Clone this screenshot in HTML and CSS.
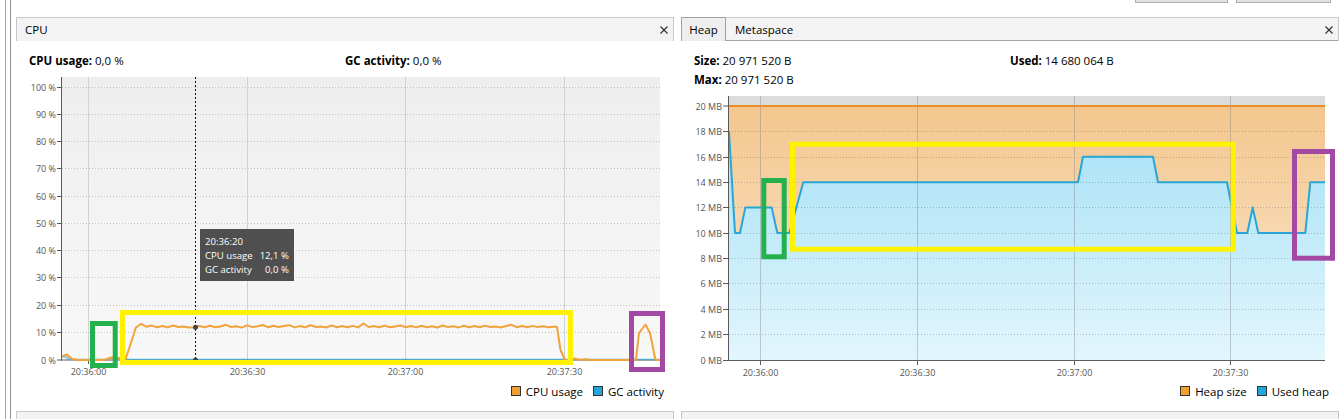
FILE: index.html
```html
<!DOCTYPE html>
<html>
<head>
<meta charset="utf-8">
<link rel="stylesheet" href="styles.css">
</head>
<body>
<div class="app">
  <div class="rail"><div class="rail-line"></div></div>
  <div class="main">
    <div class="toolbar"><div class="tbtn tbtn-a"></div><div class="tbtn tbtn-b"></div></div>
    <div class="panels">
      <section class="panel">
        <header class="phead">
          <span class="ptitle">CPU</span>
          <svg class="close" width="8" height="8" viewBox="0 0 8 8"><path d="M0.5 0.5 L7.5 7.5 M7.5 0.5 L0.5 7.5"/></svg>
        </header>
        <div class="pbody">
          <div class="stats one">
            <div><b>CPU usage:</b> 0,0 %</div>
            <div><b>GC activity:</b> 0,0 %</div>
          </div>
          <svg class="chart" width="658" height="310" viewBox="16 70 658 310">
            <defs>
              <linearGradient id="cpuBg" x1="0" y1="0" x2="0" y2="1">
                <stop offset="0" stop-color="#eeeeee"/>
                <stop offset="1" stop-color="#f8f8f8"/>
              </linearGradient>
            </defs>
            <rect x="62" y="77" width="598" height="283" fill="url(#cpuBg)"/>
            <g class="vgrid">
              <line x1="88.5" y1="77" x2="88.5" y2="360"/>
              <line x1="247.5" y1="77" x2="247.5" y2="360"/>
              <line x1="405.5" y1="77" x2="405.5" y2="360"/>
              <line x1="564.5" y1="77" x2="564.5" y2="360"/>
            </g>
            <g class="hgrid">
              <line x1="62" y1="87.5" x2="660" y2="87.5"/>
              <line x1="62" y1="114.5" x2="660" y2="114.5"/>
              <line x1="62" y1="141.5" x2="660" y2="141.5"/>
              <line x1="62" y1="168.5" x2="660" y2="168.5"/>
              <line x1="62" y1="196.5" x2="660" y2="196.5"/>
              <line x1="62" y1="223.5" x2="660" y2="223.5"/>
              <line x1="62" y1="250.5" x2="660" y2="250.5"/>
              <line x1="62" y1="277.5" x2="660" y2="277.5"/>
              <line x1="62" y1="305.5" x2="660" y2="305.5"/>
              <line x1="62" y1="332.5" x2="660" y2="332.5"/>
            </g>
            <g class="axis">
              <line x1="61.5" y1="77" x2="61.5" y2="360.5"/>
              <line x1="61" y1="360" x2="660" y2="360"/>
              <line x1="57" y1="87.5" x2="61" y2="87.5"/>
              <line x1="57" y1="114.5" x2="61" y2="114.5"/>
              <line x1="57" y1="141.5" x2="61" y2="141.5"/>
              <line x1="57" y1="168.5" x2="61" y2="168.5"/>
              <line x1="57" y1="196.5" x2="61" y2="196.5"/>
              <line x1="57" y1="223.5" x2="61" y2="223.5"/>
              <line x1="57" y1="250.5" x2="61" y2="250.5"/>
              <line x1="57" y1="277.5" x2="61" y2="277.5"/>
              <line x1="57" y1="305.5" x2="61" y2="305.5"/>
              <line x1="57" y1="332.5" x2="61" y2="332.5"/>
              <line x1="57" y1="360" x2="61" y2="360"/>
              <line x1="88.5" y1="360" x2="88.5" y2="364"/>
              <line x1="247.5" y1="360" x2="247.5" y2="364"/>
              <line x1="405.5" y1="360" x2="405.5" y2="364"/>
              <line x1="564.5" y1="360" x2="564.5" y2="364"/>
            </g>
            <g class="tick ylab">
              <text x="56" y="91">100 %</text>
              <text x="56" y="118">90 %</text>
              <text x="56" y="145">80 %</text>
              <text x="56" y="172">70 %</text>
              <text x="56" y="200">60 %</text>
              <text x="56" y="227">50 %</text>
              <text x="56" y="254">40 %</text>
              <text x="56" y="281">30 %</text>
              <text x="56" y="309">20 %</text>
              <text x="56" y="336">10 %</text>
              <text x="56" y="363.5">0 %</text>
            </g>
            <g class="tick xlab">
              <text x="88.5" y="375">20:36:00</text>
              <text x="247.5" y="375">20:36:30</text>
              <text x="405.5" y="375">20:37:00</text>
              <text x="564.5" y="375">20:37:30</text>
            </g>
            <line class="cursor" x1="195.5" y1="77" x2="195.5" y2="360"/>
            <polyline class="gc-line" points="62,356.5 66,357 70,359.5 108,359.5 112,357.5 118,357.5 122,359.5 660,359.5"/>
            <polyline class="cpu-line" points="62,356.5 67,354.5 72,359 78,360 102,360 106,359.5 111,357.5 117,357.8 121,358.5 125.3,360 130.6,344 135.9,327.5 141.2,323.8 146.5,326.8 151.8,325.6 157.1,327.2 162.4,326 167.6,327.4 172.9,325.5 178.2,327 183.5,326.4 188.8,327.4 194.1,327.2 199.4,326 204.7,327.3 210,325.8 215.3,327.2 220.5,326.5 225.8,324.8 231.1,327 236.4,326.2 241.7,327.6 247,325.4 252.3,327.1 257.6,326.3 262.9,325 268.2,327.3 273.4,325.7 278.7,327.1 284,326 289.3,325.2 294.6,327.4 299.9,326.1 305.2,327.2 310.5,325.3 315.8,327 321.1,326.6 326.3,327.5 331.6,325.4 336.9,327.2 342.2,326 347.5,327.3 352.8,325.9 358.1,327.4 363.4,323.5 368.7,327 374,326.1 379.2,327.3 384.5,325.6 389.8,327.2 395.1,326.4 400.4,325.4 405.7,327.3 411,326 416.3,327.4 421.6,325.7 426.9,327.2 432.1,326.2 437.4,327.5 442.7,325.5 448,327.1 453.3,326.3 458.6,327.4 463.9,325.8 469.2,327.2 474.5,326 479.8,327.3 485,325.6 490.3,327 495.6,326.4 500.9,327.5 506.2,326 511.5,324.8 516.8,327.2 522.1,326.1 527.4,327.3 532.7,325.9 537.9,327.1 543.2,326.3 548.5,327.2 553.8,326.8 557,326.8 560.5,350 565,360 570,360 575,358.5 580,360 586,359.2 590,360 636,360 639,333 645.5,324.5 650,333 655.5,360 660,360"/>
            <circle class="marker" cx="195.5" cy="327.3" r="2.5"/>
            <circle class="marker" cx="195.5" cy="360" r="2.5"/>
            <rect class="tip" x="200" y="229" width="94" height="52"/>
            <g class="tiptext">
              <text x="205" y="245">20:36:20</text>
              <text x="205" y="259">CPU usage</text>
              <text x="289" y="259" class="num">12,1 %</text>
              <text x="205" y="273">GC activity</text>
              <text x="289" y="273" class="num">0,0 %</text>
            </g>
            <rect class="mark green" x="92.5" y="323.5" width="22.7" height="42"/>
            <rect class="mark yellow" x="122.5" y="312.5" width="448" height="50"/>
            <rect class="mark purple" x="631.5" y="313.5" width="31" height="56"/>
          </svg>
          <div class="legend">
            <div class="litem"><span class="swatch orange"></span>CPU usage</div>
            <div class="litem"><span class="swatch blue"></span>GC activity</div>
          </div>
        </div>
      </section>
      <section class="panel">
        <header class="phead tabs">
          <div class="tab active">Heap</div>
          <div class="tab">Metaspace</div>
          <div class="tabfill">
            <svg class="close" width="8" height="8" viewBox="0 0 8 8"><path d="M0.5 0.5 L7.5 7.5 M7.5 0.5 L0.5 7.5"/></svg>
          </div>
        </header>
        <div class="pbody">
          <div class="stats two">
            <div><b>Size:</b> 20 971 520 B</div>
            <div><b>Used:</b> 14 680 064 B</div>
            <div><b>Max:</b> 20 971 520 B</div>
          </div>
          <svg class="chart" width="658" height="291" viewBox="681 89 658 291">
            <defs>
              <linearGradient id="heapOr" gradientUnits="userSpaceOnUse" x1="0" y1="106" x2="0" y2="360">
                <stop offset="0" stop-color="#f3c68d"/>
                <stop offset="1" stop-color="#fce9d3"/>
              </linearGradient>
              <linearGradient id="heapBl" gradientUnits="userSpaceOnUse" x1="0" y1="131" x2="0" y2="360">
                <stop offset="0" stop-color="#a8e1f6"/>
                <stop offset="1" stop-color="#e2f6fd"/>
              </linearGradient>
            </defs>
            <rect x="729" y="96" width="596" height="10" fill="#dcdcdc"/>
            <rect x="729" y="106" width="596" height="254" fill="url(#heapOr)"/>
            <polygon fill="url(#heapBl)" points="729,131.4 735,233 740,233 745.3,207.6 771.7,207.6 777.3,233 789.3,233 803.3,182.2 1078,182.2 1083,156.8 1153,156.8 1158,182.2 1227,182.2 1237,233 1247.3,233 1252.7,207.6 1258.3,233 1305.3,233 1310.3,182.2 1325,182.2 1325,360 729,360"/>
            <g class="hgrid heapgrid">
              <line x1="729" y1="131.5" x2="1325" y2="131.5"/>
              <line x1="729" y1="157.5" x2="1325" y2="157.5"/>
              <line x1="729" y1="182.5" x2="1325" y2="182.5"/>
              <line x1="729" y1="207.5" x2="1325" y2="207.5"/>
              <line x1="729" y1="233.5" x2="1325" y2="233.5"/>
              <line x1="729" y1="258.5" x2="1325" y2="258.5"/>
              <line x1="729" y1="283.5" x2="1325" y2="283.5"/>
              <line x1="729" y1="309.5" x2="1325" y2="309.5"/>
              <line x1="729" y1="334.5" x2="1325" y2="334.5"/>
            </g>
            <g class="vgrid heapv">
              <line x1="760.5" y1="96" x2="760.5" y2="360"/>
              <line x1="917.5" y1="96" x2="917.5" y2="360"/>
              <line x1="1074.5" y1="96" x2="1074.5" y2="360"/>
              <line x1="1230.5" y1="96" x2="1230.5" y2="360"/>
            </g>
            <line class="size-line" x1="729" y1="106" x2="1325" y2="106"/>
            <polyline class="used-line" points="729,131.4 735,233 740,233 745.3,207.6 771.7,207.6 777.3,233 789.3,233 803.3,182.2 1078,182.2 1083,156.8 1153,156.8 1158,182.2 1227,182.2 1237,233 1247.3,233 1252.7,207.6 1258.3,233 1305.3,233 1310.3,182.2 1325,182.2"/>
            <g class="axis">
              <line x1="728.5" y1="96" x2="728.5" y2="361"/>
              <line x1="728" y1="360.5" x2="1325" y2="360.5"/>
              <line x1="723" y1="106" x2="728" y2="106"/>
              <line x1="723" y1="131.5" x2="728" y2="131.5"/>
              <line x1="723" y1="157.5" x2="728" y2="157.5"/>
              <line x1="723" y1="182.5" x2="728" y2="182.5"/>
              <line x1="723" y1="207.5" x2="728" y2="207.5"/>
              <line x1="723" y1="233.5" x2="728" y2="233.5"/>
              <line x1="723" y1="258.5" x2="728" y2="258.5"/>
              <line x1="723" y1="283.5" x2="728" y2="283.5"/>
              <line x1="723" y1="309.5" x2="728" y2="309.5"/>
              <line x1="723" y1="334.5" x2="728" y2="334.5"/>
              <line x1="723" y1="360.5" x2="728" y2="360.5"/>
              <line x1="760.5" y1="360" x2="760.5" y2="365"/>
              <line x1="917.5" y1="360" x2="917.5" y2="365"/>
              <line x1="1074.5" y1="360" x2="1074.5" y2="365"/>
              <line x1="1230.5" y1="360" x2="1230.5" y2="365"/>
            </g>
            <g class="tick ylab">
              <text x="722" y="109.5">20 MB</text>
              <text x="722" y="135">18 MB</text>
              <text x="722" y="161">16 MB</text>
              <text x="722" y="186">14 MB</text>
              <text x="722" y="211">12 MB</text>
              <text x="722" y="237">10 MB</text>
              <text x="722" y="262">8 MB</text>
              <text x="722" y="287">6 MB</text>
              <text x="722" y="313">4 MB</text>
              <text x="722" y="338">2 MB</text>
              <text x="722" y="364">0 MB</text>
            </g>
            <g class="tick xlab">
              <text x="760.5" y="376">20:36:00</text>
              <text x="917.5" y="376">20:36:30</text>
              <text x="1074.5" y="376">20:37:00</text>
              <text x="1230.5" y="376">20:37:30</text>
            </g>
            <rect class="mark green" x="763.8" y="180.5" width="20.4" height="76.3"/>
            <rect class="mark yellow" x="792.5" y="144.2" width="440.7" height="105"/>
            <rect class="mark purple" x="1294.5" y="151.5" width="38" height="106.7"/>
          </svg>
          <div class="legend">
            <div class="litem"><span class="swatch orange"></span>Heap size</div>
            <div class="litem"><span class="swatch blue"></span>Used heap</div>
          </div>
        </div>
      </section>
    </div>
    <div class="panels bottom">
      <div class="stub"></div>
      <div class="stub"></div>
    </div>
  </div>
</div>
</body>
</html>
```

FILE: styles.css
```css
html, body {
  margin: 0;
  padding: 0;
}
body {
  width: 1341px;
  height: 419px;
  overflow: hidden;
  background: #ffffff;
  font-family: "Open Sans", "Segoe UI", "Noto Sans", sans-serif;
  font-size: 11.5px;
  color: #000;
}
.app {
  display: flex;
  height: 419px;
}
.rail {
  width: 16px;
  flex: none;
  box-sizing: border-box;
  padding-left: 5px;
}
.rail-line {
  width: 4px;
  height: 100%;
  border-left: 1px solid #a5a5a5;
  border-right: 1px solid #8f8f8f;
}
.main {
  flex: 1;
  display: flex;
  flex-direction: column;
  min-width: 0;
}
.toolbar {
  height: 17px;
  flex: none;
  display: flex;
  justify-content: flex-end;
  align-items: flex-start;
  gap: 8px;
  padding-right: 10px;
}
.tbtn {
  box-sizing: border-box;
  height: 3px;
  background: #e1e1e1;
  border: 1px solid #adadad;
  border-top: none;
}
.tbtn-a { width: 93px; }
.tbtn-b { width: 95px; }
.panels {
  display: flex;
  gap: 7px;
  height: 394px;
  flex: none;
}
.panel {
  width: 658px;
  display: flex;
  flex-direction: column;
}
.phead {
  box-sizing: border-box;
  height: 24px;
  flex: none;
  display: flex;
  align-items: center;
  background: #f3f3f3;
  border: 1px solid #c8c8c8;
  border-bottom: none;
  padding: 0 5px 0 8px;
}
.ptitle {
  flex: 1;
}
.close {
  display: block;
  margin-left: auto;
}
.close path {
  stroke: #333;
  stroke-width: 1.2;
  fill: none;
}
.tabs {
  padding: 0;
  border-left: none;
  align-items: stretch;
  box-shadow: inset 0 -1px 0 #a6a6a6;
}
.tab {
  display: flex;
  align-items: center;
  padding: 0 0 0 9px;
}
.tab.active {
  box-sizing: border-box;
  width: 45px;
  justify-content: center;
  padding: 0;
  margin-top: -1px;
  background: #eeeeee;
  border: 1px solid #a0a0a0;
  border-bottom: none;
}
.tabfill {
  flex: 1;
  display: flex;
  align-items: center;
  padding-right: 5px;
}
.pbody {
  flex: 1;
  display: flex;
  flex-direction: column;
  padding-top: 10px;
}
.stats {
  display: grid;
  grid-template-columns: 1fr 1fr;
  padding: 0 13px;
  line-height: 19px;
  flex: none;
}
.stats.one { height: 19px; }
.stats.two { height: 38px; }
.stats b {
  font-weight: 700;
}
.chart {
  display: block;
  flex: none;
}
.vgrid line {
  stroke: #d2d2d2;
  stroke-width: 1;
}
.heapv line {
  stroke: rgba(130, 130, 130, 0.4);
}
.hgrid line {
  stroke: #c2c2c2;
  stroke-width: 1;
  stroke-dasharray: 1 2;
}
.heapgrid line {
  stroke: rgba(120, 120, 120, 0.45);
}
.axis line {
  stroke: #5a5a5a;
  stroke-width: 1;
}
.tick {
  font-family: "Open Sans", "Segoe UI", sans-serif;
  font-size: 9px;
  fill: #555;
}
.ylab text {
  text-anchor: end;
}
.xlab text {
  text-anchor: middle;
}
.cursor {
  stroke: #111;
  stroke-width: 1;
  stroke-dasharray: 2 2;
}
.cpu-line {
  fill: none;
  stroke: #f2a23a;
  stroke-width: 2;
  stroke-linejoin: round;
}
.gc-line {
  fill: none;
  stroke: #2aa8da;
  stroke-width: 1.5;
  stroke-opacity: 0.7;
  stroke-linejoin: round;
}
.marker {
  fill: #444;
}
.tip {
  fill: #4f4f4f;
}
.tiptext text {
  font-family: "Open Sans", "Segoe UI", sans-serif;
  font-size: 9.6px;
  fill: #ffffff;
}
.tiptext .num {
  text-anchor: end;
}
.size-line {
  stroke: #e98f25;
  stroke-width: 2;
}
.used-line {
  fill: none;
  stroke: #29a5d6;
  stroke-width: 2;
  stroke-linejoin: round;
}
.mark {
  fill: none;
  stroke-width: 5;
}
.mark.green { stroke: #22b14c; }
.mark.yellow { stroke: #fff200; }
.mark.purple { stroke: #a349a4; }
.legend {
  height: 22px;
  flex: none;
  display: flex;
  justify-content: flex-end;
  align-items: center;
  gap: 10px;
  padding-right: 10px;
}
.litem {
  display: flex;
  align-items: center;
  gap: 5px;
}
.swatch {
  display: block;
  box-sizing: border-box;
  width: 10px;
  height: 10px;
  border: 1px solid #333;
}
.swatch.orange { background: #f0a030; }
.swatch.blue { background: #22a6d8; }
.panels.bottom {
  height: 24px;
}
.stub {
  box-sizing: border-box;
  width: 658px;
  height: 24px;
  background: #f3f3f3;
  border: 1px solid #c8c8c8;
  border-bottom: none;
}
```
